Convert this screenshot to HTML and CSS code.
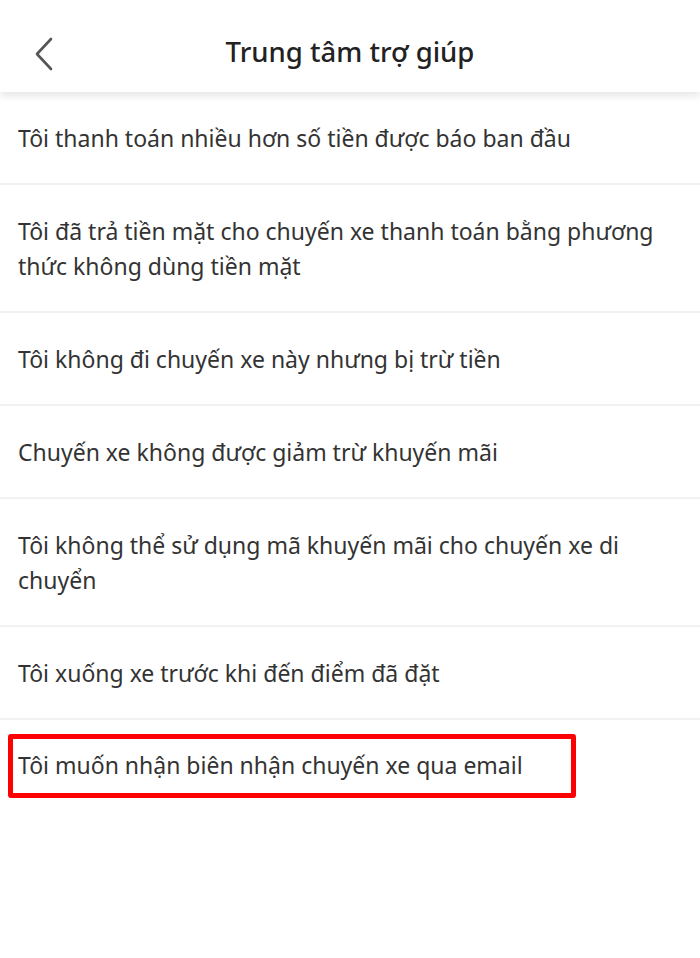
FILE: index.html
```html
<!DOCTYPE html>
<html lang="vi">
<head>
<meta charset="utf-8">
<link rel="stylesheet" href="styles.css">
</head>
<body>
<header class="topbar">
  <span class="back"><svg width="22" height="34" viewBox="0 0 22 34"><path d="M18 2 L4 17 L18 32" fill="none" stroke="#555" stroke-width="2.6" stroke-linecap="round" stroke-linejoin="round"/></svg></span>
  <h1 class="title">Trung tâm trợ giúp</h1>
</header>
<ul class="list">
  <li class="item">Tôi thanh toán nhiều hơn số tiền được báo ban đầu</li>
  <li class="item">Tôi đã trả tiền mặt cho chuyến xe thanh toán bằng phương thức không dùng tiền mặt</li>
  <li class="item">Tôi không đi chuyến xe này nhưng bị trừ tiền</li>
  <li class="item">Chuyến xe không được giảm trừ khuyến mãi</li>
  <li class="item">Tôi không thể sử dụng mã khuyến mãi cho chuyến xe di chuyển</li>
  <li class="item">Tôi xuống xe trước khi đến điểm đã đặt</li>
  <li class="item last"><span class="mark">Tôi muốn nhận biên nhận chuyến xe qua email</span></li>
</ul>
</body>
</html>
```
FILE: styles.css
```css
html, body {
  margin: 0;
  padding: 0;
  background: #fff;
}
body {
  width: 700px;
  font-family: "Noto Sans", "Open Sans", sans-serif;
  color: #333;
}
.topbar {
  position: relative;
  height: 92px;
  display: flex;
  align-items: center;
  justify-content: center;
  background: #fff;
  box-shadow: 0 4px 8px rgba(0,0,0,0.10);
  z-index: 1;
}
.back {
  position: absolute;
  left: 33px;
  top: 37px;
  display: flex;
}
.title {
  margin: 0;
  font-size: 27.5px;
  font-weight: 500;
  color: #222;
  position: relative;
  top: 5px;
}
.list {
  list-style: none;
  margin: 0;
  padding: 0;
}
.item {
  padding: 29px 20px 27px 18px;
  font-size: 23px;
  line-height: 35px;
  border-bottom: 2px solid #f2f2f2;
}
.item.last {
  border-bottom: none;
  padding: 14px 0 0 8px;
}
.mark {
  display: inline-block;
  border: 5px solid #ff0000;
  border-radius: 3px;
  padding: 9px 48px 10px 5px;
}
```
